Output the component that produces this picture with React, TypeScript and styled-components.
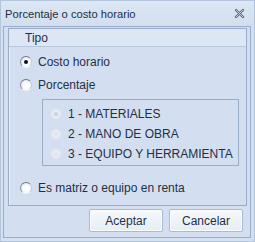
import * as React from 'react';
import styled, {createGlobalStyle} from 'styled-components';

const GlobalStyle = createGlobalStyle`
    html, body {
        margin: 0;
        padding: 0;
        background: #d6e2f1;
    }
    * {
        box-sizing: border-box;
    }
`

const Window = styled.div`
    width: 255px;
    height: 242px;
    display: flex;
    flex-direction: column;
    background: #d4e0f0;
    border: 1px solid #b3c5dc;
    font-family: 'Liberation Sans', Arial, sans-serif;
    font-size: 11px;
    color: #1e2f47;
`

const TitleBar = styled.div`
    height: 27px;
    display: flex;
    align-items: center;
    justify-content: space-between;
    padding: 0 9px 0 4px;
    background: linear-gradient(#dde7f4, #d2deef);
    font-size: 11.2px;
    color: #1e2d44;
`

const CloseButton = styled.svg`
    width: 11px;
    height: 11px;
`

const Client = styled.div`
    flex: 1;
    margin: 0 3px 3px 2px;
    border: 1px solid #9aaecb;
    background: #d3dff0;
    display: flex;
    flex-direction: column;
    padding: 1px 3px 5px 4px;
`

const GroupBox = styled.div`
    border: 1px solid #98abc7;
    display: flex;
    flex-direction: column;
    height: 178px;
    box-shadow: inset 1px 1px 0 #e6eef8;
`

const GroupHeader = styled.div`
    height: 18px;
    display: flex;
    align-items: center;
    padding-left: 16px;
    background: #dce6f4;
    border-bottom: 1px solid #b7c7dc;
    font-size: 12px;
`

const GroupBody = styled.div`
    display: flex;
    flex-direction: column;
    padding: 3px 6px 0 11px;
`

const OptionRow = styled.label<{$indent?: boolean}>`
    display: flex;
    align-items: center;
    gap: 6px;
    height: ${p => p.$indent ? '20px' : '23px'};
    color: #1e2f47;
    font-size: 12px;
`

const SubBox = styled.div`
    margin: 3px 0 10px 22px;
    width: 197px;
    height: 67px;
    border: 1px solid #9aadc8;
    padding: 4px 0 0 7px;
    display: flex;
    flex-direction: column;
`

const RadioDot = styled.span<{$checked?: boolean; $disabled?: boolean}>`
    width: 12px;
    height: 12px;
    border-radius: 50%;
    flex: none;
    position: relative;
    border: 1px solid;
    border-color: ${p => p.$disabled ? '#d5dde8' : '#6d7786 #c4ccd6 #eef2f7 #8a94a2'};
    background: ${p => p.$disabled
        ? 'radial-gradient(circle at 50% 50%, #dfe6ef 0, #e6ecf4 60%, #d9e2ee 100%)'
        : 'radial-gradient(circle at 60% 60%, #ffffff 0, #f4f6f9 55%, #c9d0d9 100%)'};

    &::after {
        content: '';
        display: ${p => p.$checked ? 'block' : 'none'};
        position: absolute;
        left: 3px;
        top: 3px;
        width: 4px;
        height: 4px;
        border-radius: 50%;
        background: ${p => p.$disabled ? '#cbd4df' : '#111'};
    }
`

const ButtonRow = styled.div`
    display: flex;
    justify-content: flex-end;
    gap: 6px;
    margin-top: 3px;
    padding-right: 4px;
`

const Button = styled.button`
    width: 74px;
    height: 23px;
    border: 1px solid #a9bad1;
    border-radius: 2px;
    background: linear-gradient(#f7f9fc, #e6edf6);
    box-shadow: inset 0 0 0 1px #fbfcfe;
    font-family: 'Liberation Sans', Arial, sans-serif;
    font-size: 12px;
    color: #1e2f47;
    padding: 0;
`

const subItems = ['1 - MATERIALES', '2 - MANO DE OBRA', '3 - EQUIPO Y HERRAMIENTA'];

export default function App() {
    return (
        <>
            <GlobalStyle/>
            <Window>
                <TitleBar>
                    <span>Porcentaje o costo horario</span>
                    <CloseButton viewBox="0 0 11 11">
                        <path d="M2 2 L9 9 M9 2 L2 9" stroke="#56657a" strokeWidth="2.4" strokeLinecap="round"/>
                        <path d="M2 2 L9 9 M9 2 L2 9" stroke="#e4ebf4" strokeWidth="0.8" strokeLinecap="round"/>
                    </CloseButton>
                </TitleBar>
                <Client>
                    <GroupBox>
                        <GroupHeader>Tipo</GroupHeader>
                        <GroupBody>
                            <OptionRow>
                                <RadioDot $checked/>
                                Costo horario
                            </OptionRow>
                            <OptionRow>
                                <RadioDot/>
                                Porcentaje
                            </OptionRow>
                            <SubBox>
                                {subItems.map((item, i) => (
                                    <OptionRow key={item} $indent>
                                        <RadioDot $checked={i === 0} $disabled/>
                                        {item}
                                    </OptionRow>
                                ))}
                            </SubBox>
                            <OptionRow>
                                <RadioDot/>
                                Es matriz o equipo en renta
                            </OptionRow>
                        </GroupBody>
                    </GroupBox>
                    <ButtonRow>
                        <Button>Aceptar</Button>
                        <Button>Cancelar</Button>
                    </ButtonRow>
                </Client>
            </Window>
        </>
    );
}
